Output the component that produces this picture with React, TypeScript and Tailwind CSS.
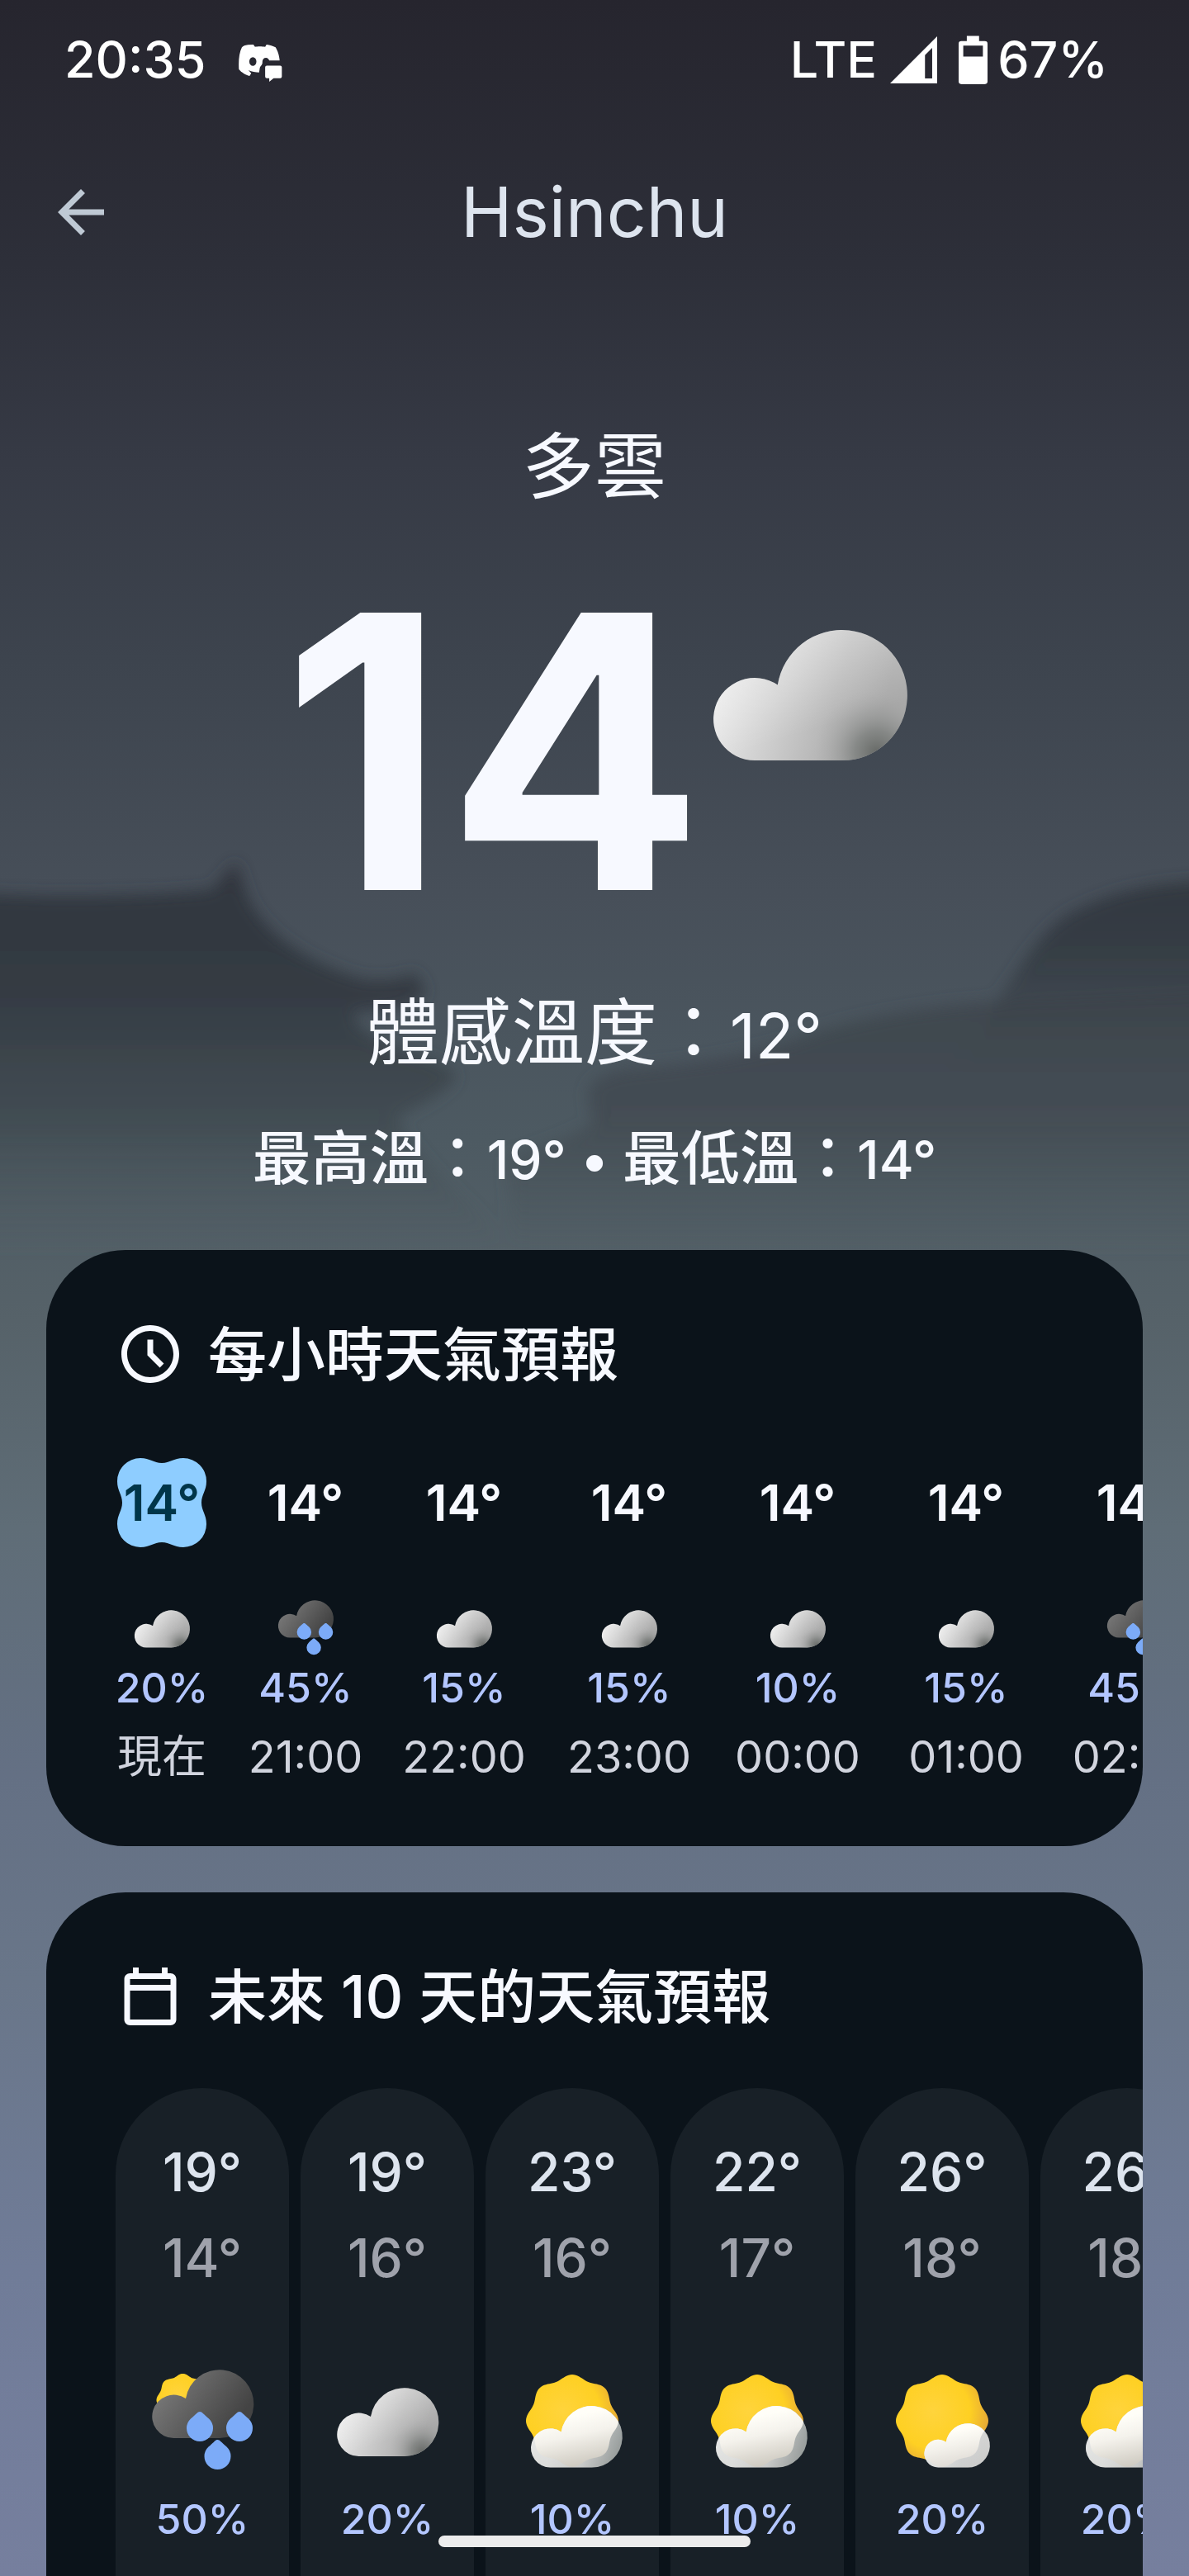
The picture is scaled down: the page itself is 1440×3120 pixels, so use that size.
import React, { useId } from 'react';

type IconKind = 'cloud' | 'rain' | 'sunRain' | 'partly' | 'mostlySunny';

const hours: { temp: string; icon: IconKind; chance: string; time: string; width: string }[] = [
  { temp: '14°', icon: 'cloud', chance: '20%', time: '現在', width: 'w-[112px]' },
  { temp: '14°', icon: 'rain', chance: '45%', time: '21:00', width: 'w-[140px]' },
  { temp: '14°', icon: 'cloud', chance: '15%', time: '22:00', width: 'w-[148px]' },
  { temp: '14°', icon: 'cloud', chance: '15%', time: '23:00', width: 'w-[156px]' },
  { temp: '14°', icon: 'cloud', chance: '10%', time: '00:00', width: 'w-[156px]' },
  { temp: '14°', icon: 'cloud', chance: '15%', time: '01:00', width: 'w-[156px]' },
  { temp: '14°', icon: 'rain', chance: '45%', time: '02:00', width: 'w-[156px]' },
];

const days: { high: string; low: string; icon: IconKind; chance: string }[] = [
  { high: '19°', low: '14°', icon: 'sunRain', chance: '50%' },
  { high: '19°', low: '16°', icon: 'cloud', chance: '20%' },
  { high: '23°', low: '16°', icon: 'partly', chance: '10%' },
  { high: '22°', low: '17°', icon: 'partly', chance: '10%' },
  { high: '26°', low: '18°', icon: 'mostlySunny', chance: '20%' },
  { high: '26°', low: '18°', icon: 'partly', chance: '20%' },
];

const CLOUD = 'M42.4 120A26.2 26.2 0 1 1 57 72A41.4 41.4 0 1 1 98 120Z';
const DROP = 'M0 0C3 0 4 3 11 8.4A16 16 0 1 1 -11 8.4C-4 3 -3 0 0 0Z';

/* Eight-lobed sun outline centred on 77,77. */
const SUN = (() => {
  const points: string[] = [];
  for (let i = 0; i < 160; i++) {
    const a = (i / 160) * Math.PI * 2;
    const r = 53.4 + 2.6 * Math.cos(8 * a);
    points.push(`${(77 + r * Math.cos(a)).toFixed(2)} ${(77 + r * Math.sin(a)).toFixed(2)}`);
  }
  return `M${points.join('L')}Z`;
})();

function WeatherIcon({ kind, className }: { kind: IconKind; className: string }) {
  const id = useId().replace(/[^a-zA-Z0-9]/g, '');
  const url = (name: string) => `url(#${name}${id})`;
  const rainy = kind === 'rain' || kind === 'sunRain';
  const coverTransform =
    kind === 'partly' ? 'translate(12.4 25.6) scale(0.9)' : 'translate(45 56.2) scale(0.645)';
  return (
    <svg viewBox="0 0 154 154" className={className} aria-hidden="true">
      <defs>
        <linearGradient id={`light${id}`} gradientUnits="userSpaceOnUse" x1="18" y1="84" x2="118" y2="110">
          <stop offset="0" stopColor="#e8e8e8" />
          <stop offset="0.7" stopColor="#b6b6b6" />
          <stop offset="1" stopColor="#a8a8a8" />
        </linearGradient>
        <linearGradient id={`sheen${id}`} gradientUnits="userSpaceOnUse" x1="80" y1="37" x2="98" y2="95">
          <stop offset="0" stopColor="#ffffff" stopOpacity="0.4" />
          <stop offset="1" stopColor="#ffffff" stopOpacity="0" />
        </linearGradient>
        <radialGradient id={`shade${id}`} gradientUnits="userSpaceOnUse" cx="120" cy="115" r="40">
          <stop offset="0" stopColor="#666966" />
          <stop offset="0.35" stopColor="#7d807e" stopOpacity="0.8" />
          <stop offset="1" stopColor="#b0b0b0" stopOpacity="0" />
        </radialGradient>
        <linearGradient id={`dark${id}`} gradientUnits="userSpaceOnUse" x1="40" y1="50" x2="115" y2="105">
          <stop offset="0" stopColor="#757575" />
          <stop offset="1" stopColor="#444444" />
        </linearGradient>
        <radialGradient id={`sun${id}`} gradientUnits="userSpaceOnUse" cx="66" cy="66" r="72">
          <stop offset="0" stopColor="#ffd43c" />
          <stop offset="0.62" stopColor="#fed023" />
          <stop offset="1" stopColor="#e2a33a" />
        </radialGradient>
        <linearGradient id={`cover${id}`} gradientUnits="userSpaceOnUse" x1="76" y1="50" x2="92" y2="122">
          <stop offset="0" stopColor="#fffef8" />
          <stop offset="0.35" stopColor="#f4f2ec" />
          <stop offset="1" stopColor={kind === 'partly' ? '#c8c4ba' : '#dad6d0'} />
        </linearGradient>
        <linearGradient id={`back${id}`} gradientUnits="userSpaceOnUse" x1="40" y1="100" x2="132" y2="112">
          <stop offset="0" stopColor="#dde0e1" />
          <stop offset="0.5" stopColor="#c6cacc" />
          <stop offset="1" stopColor={kind === 'partly' ? '#7f888a' : '#c4c6c7'} />
        </linearGradient>
        <clipPath id={`clip${id}`}>
          <path d={SUN} />
        </clipPath>
      </defs>
      {kind === 'cloud' && (
        <>
          <path d={CLOUD} fill={url('light')} />
          <path d={CLOUD} fill={url('sheen')} />
          <path d={CLOUD} fill={url('shade')} />
        </>
      )}
      {kind === 'sunRain' && <path d={SUN} fill={url('sun')} transform="translate(9.5 8) scale(0.57)" />}
      {rainy && (
        <>
          <path d={CLOUD} fill={url('dark')} transform="translate(0 -22)" />
          <g fill="#7cabf8">
            <path d={DROP} transform="translate(74 66)" />
            <path d={DROP} transform="translate(122 66)" />
            <path d={DROP} transform="translate(95.5 100)" />
          </g>
        </>
      )}
      {(kind === 'partly' || kind === 'mostlySunny') && (
        <>
          <path d={SUN} fill={url('sun')} />
          <path d={CLOUD} fill={url('back')} transform={coverTransform} />
          <g clipPath={url('clip')}>
            <path d={CLOUD} fill={url('cover')} transform={coverTransform} />
          </g>
          <path d={CLOUD} fill={url('cover')} fillOpacity="0.3" transform={coverTransform} />
        </>
      )}
    </svg>
  );
}

function Hills() {
  return (
    <svg
      viewBox="0 0 1440 600"
      preserveAspectRatio="none"
      className="pointer-events-none absolute inset-x-0 top-[960px] h-[600px] w-full"
      aria-hidden="true"
    >
      <defs>
        <linearGradient id="hillNear" x1="0" y1="100" x2="0" y2="560" gradientUnits="userSpaceOnUse">
          <stop offset="0" stopColor="#31363e" />
          <stop offset="0.3" stopColor="#343b43" />
          <stop offset="0.65" stopColor="#3f494f" stopOpacity="0.8" />
          <stop offset="1" stopColor="#4f5b62" stopOpacity="0" />
        </linearGradient>
        <linearGradient id="hillSide" x1="0" y1="100" x2="0" y2="380" gradientUnits="userSpaceOnUse">
          <stop offset="0" stopColor="#31363e" />
          <stop offset="0.4" stopColor="#363d45" stopOpacity="0.9" />
          <stop offset="1" stopColor="#444d54" stopOpacity="0" />
        </linearGradient>
        <linearGradient id="hillFar" x1="0" y1="240" x2="0" y2="560" gradientUnits="userSpaceOnUse">
          <stop offset="0" stopColor="#3f464e" />
          <stop offset="0.5" stopColor="#444d54" />
          <stop offset="1" stopColor="#4c585e" stopOpacity="0" />
        </linearGradient>
        <filter id="haze" x="-10%" y="-10%" width="120%" height="120%">
          <feGaussianBlur stdDeviation="9" />
        </filter>
      </defs>
      <g filter="url(#haze)">
        <path
          d="M620 640L615 442Q700 415 718 400L712 365Q716 338 770 334Q880 325 960 300Q1060 262 1220 252L1500 240V640Z"
          fill="url(#hillFar)"
        />
        <path
          d="M1130 400C1180 330 1200 262 1215 240C1245 200 1262 162 1304 142C1350 120 1390 108 1500 106V640H1130Z"
          fill="url(#hillSide)"
        />
        <path
          d="M-60 120C60 128 160 126 256 118L286 84L300 126C318 168 370 206 440 226Q480 230 502 218L516 240Q506 262 430 266Q420 282 480 310Q550 328 552 345Q540 366 482 392Q488 422 560 490Q610 530 620 570V640H-60Z"
          fill="url(#hillNear)"
        />
      </g>
    </svg>
  );
}

function DiscordIcon() {
  return (
    <svg viewBox="58 70 160 140" className="h-[47px] w-[53px]" fill="#fff" aria-label="Discord">
      <path
        fillRule="evenodd"
        d="M92 73C82 74 74 78 70 82C60 102 57 130 59 163C68 174 84 184 98 187L104 177L94 166C106 172 120 174 133 174L135 160C136 150 145 148 145 138C144 126 150 120 158 120C164 120 168 124 170 130H208C206 108 200 94 193 82C184 77 172 74 160 72L155 80C145 78 125 78 118 80L112 72ZM110 118A13 16 0 1 0 110 150A13 16 0 1 0 110 118Z"
      />
      <path d="M161 149H210Q216 149 216 155V189Q216 195 210 195H186L170 208V195H161Q155 195 155 189V155Q155 149 161 149Z" />
    </svg>
  );
}

export default function App() {
  return (
    <div className="relative flex min-h-screen w-full flex-col overflow-hidden bg-[linear-gradient(to_bottom,#26252e_0px,#2d2f39_320px,#363a45_560px,#3d444e_800px,#474f59_1080px,#4d5a62_1380px,#566269_1600px,#5f6d77_1850px,#647084_2150px,#697689_2400px,#707c98_2750px,#767f9e_3120px)] font-['Inter','Noto_Sans_CJK_TC',sans-serif] text-[#f7f9ff]">
      <Hills />

      <div className="relative flex h-[144px] shrink-0 items-center justify-between pr-[98px] pl-[78px] text-[61px] leading-[72px] font-medium text-white">
        <div className="flex items-center gap-[40px]">
          <span>20:35</span>
          <span className="pt-[8px]">
            <DiscordIcon />
          </span>
        </div>
        <div className="flex items-center">
          <span>LTE</span>
          <svg viewBox="33 44 170 170" className="ml-[16px] h-[57px] w-[57px]" fill="#fff" aria-hidden="true">
            <path fillRule="evenodd" d="M33 214L203 44V214ZM159 112V196H185V86Z" />
          </svg>
          <svg viewBox="282 36 106 178" className="mr-[12px] ml-[26px] h-[59px] w-[35px]" fill="#fff" aria-hidden="true">
            <path
              fillRule="evenodd"
              d="M312 37H357V56H378Q388 56 388 66V204Q388 214 378 214H292Q282 214 282 204V66Q282 56 292 56H312ZM299 73V113H371V73Z"
            />
          </svg>
          <span>67%</span>
        </div>
      </div>

      <header className="relative grid h-[226px] shrink-0 grid-cols-[84px_1fr_84px] items-center px-[56px]">
        <button type="button" aria-label="返回" className="h-[84px] w-[84px] text-[#bfc9d4]">
          <svg viewBox="0 0 24 24" className="h-full w-full" fill="currentColor" aria-hidden="true">
            <path d="M20 11H7.83l5.59-5.59L12 4l-8 8 8 8 1.41-1.41L7.83 13H20v-2z" />
          </svg>
        </button>
        <h1 className="text-center text-[84px] leading-[104px] text-[#dde4ee]">Hsinchu</h1>
      </header>

      <section className="relative flex shrink-0 flex-col items-center">
        <p className="mt-[148px] text-[87px] leading-[96px]">多雲</p>
        <div className="mt-[78px] flex items-start pl-[28px]">
          <span className="text-[462px] leading-[436px] font-bold">14</span>
          <WeatherIcon kind="cloud" className="-ml-5 h-[294px] w-[294px]" />
        </div>
        <p className="mt-[70px] text-[88px] leading-[104px]">
          體感溫度：<span className="text-[76px]">12°</span>
        </p>
        <p className="mt-[54px] text-[71px] leading-[84px] font-medium">
          最高溫：<span className="text-[64px]">19° • </span>最低溫：<span className="text-[64px]">14°</span>
        </p>
      </section>

      <main className="relative mt-[67px] flex flex-1 flex-col gap-14 px-14">
        <section className="overflow-hidden rounded-[96px] bg-[#0b131a] pt-[84px] pb-[78px] pl-[84px]">
          <h2 className="flex h-[84px] items-center gap-[28px] text-[71px] leading-[84px] font-medium">
            <svg viewBox="0 0 24 24" className="h-[84px] w-[84px]" fill="currentColor" aria-hidden="true">
              <path d="M11.99 2C6.47 2 2 6.48 2 12s4.47 10 9.99 10C17.52 22 22 17.52 22 12S17.52 2 11.99 2zM12 20c-4.42 0-8-3.58-8-8s3.58-8 8-8 8 3.58 8 8-3.58 8-8 8zM13 7h-2v5.4l4.3 4.3 1.4-1.4-3.7-3.7z" />
            </svg>
            每小時天氣預報
          </h2>
          <ul className="mt-[84px] flex gap-12">
            {hours.map((hour, i) => (
              <li key={hour.time} className={`flex shrink-0 flex-col items-center whitespace-nowrap ${hour.width}`}>
                <div className="relative flex h-[108px] w-[108px] items-center justify-center">
                  {i === 0 && (
                    <svg viewBox="0 0 108 108" className="absolute inset-0 h-full w-full" aria-hidden="true">
                      <path
                        d="M28 0C40 0 44 6 54 6C64 6 68 0 80 0A28 28 0 0 1 108 28C108 40 102 44 102 54C102 64 108 68 108 80A28 28 0 0 1 80 108C68 108 64 102 54 102C44 102 40 108 28 108A28 28 0 0 1 0 80C0 68 6 64 6 54C6 44 0 40 0 28A28 28 0 0 1 28 0Z"
                        fill="#8ecdff"
                      />
                    </svg>
                  )}
                  <span
                    className={`relative text-[61px] leading-[80px] font-semibold ${i === 0 ? 'text-[#003549]' : 'text-[#f7f9ff]'}`}
                  >
                    {hour.temp}
                  </span>
                </div>
                <WeatherIcon kind={hour.icon} className="mt-14 h-[84px] w-[84px]" />
                <span className="text-[50px] leading-[60px] font-medium text-[#b3c6ff]">{hour.chance}</span>
                <span className="mt-6 text-[54px] leading-[60px] text-[#d1d4de]">{hour.time}</span>
              </li>
            ))}
          </ul>
        </section>

        <section className="flex flex-1 flex-col overflow-hidden rounded-t-[96px] bg-[#0b131a] pt-[84px] pl-[84px]">
          <h2 className="flex h-[84px] items-center gap-[28px] text-[71px] leading-[84px] font-medium">
            <svg viewBox="0 0 24 24" className="h-[84px] w-[84px]" fill="currentColor" aria-hidden="true">
              <path d="M19 4h-1V2h-2v2H8V2H6v2H5c-1.11 0-1.99.9-1.99 2L3 20c0 1.1.89 2 2 2h14c1.1 0 2-.9 2-2V6c0-1.1-.9-2-2-2zm0 16H5V10h14v10zm0-12H5V6h14v2z" />
            </svg>
            未來 10 天的天氣預報
          </h2>
          <ul className="mt-[69px] flex flex-1 gap-[14px]">
            {days.map((day, i) => (
              <li
                key={i}
                className="flex w-[210px] shrink-0 flex-col items-center rounded-t-full bg-[#182027] pt-[62px] font-medium whitespace-nowrap"
              >
                <span className="text-[64px] leading-[80px] text-[#dde4ee]">{day.high}</span>
                <span className="mt-6 text-[64px] leading-[80px] text-[#9fa2ab]">{day.low}</span>
                <WeatherIcon kind={day.icon} className="mt-20 h-[154px] w-[154px]" />
                <span className="mt-3 text-[50px] leading-[60px] text-[#b3c6ff]">{day.chance}</span>
              </li>
            ))}
          </ul>
        </section>
      </main>

      <div className="absolute bottom-[35px] left-1/2 h-[14px] w-[378px] -translate-x-1/2 rounded-full bg-[#ececec]" />
    </div>
  );
}
